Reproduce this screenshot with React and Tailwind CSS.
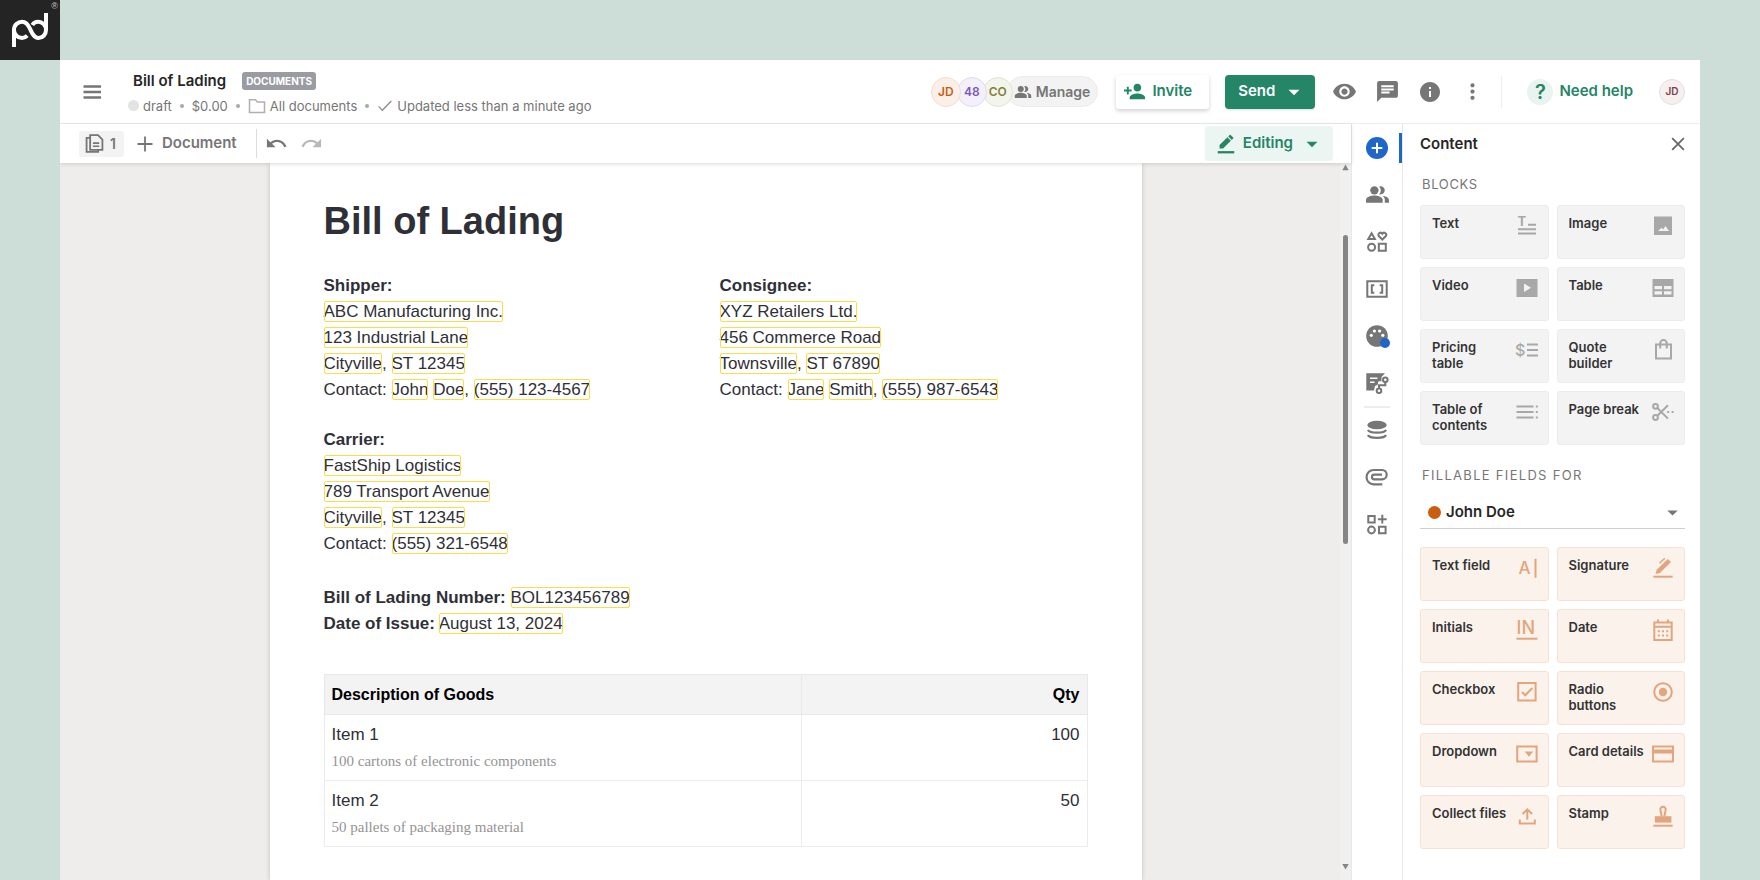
import React from "react";
import {
  MdArrowDropDown,
  MdChat,
  MdInfo,
  MdMoreVert,
  MdPeopleAlt,
  MdPersonAdd,
  MdRedo,
  MdUndo,
  MdVisibility,
} from "react-icons/md";

const Icon = ({ size = 24, className = "", children }) => (
  <svg
    width={size}
    height={size}
    viewBox="0 0 24 24"
    fill="none"
    stroke="currentColor"
    strokeWidth="2"
    className={`shrink-0 ${className}`}
    aria-hidden="true"
  >
    {children}
  </svg>
);

const Solid = ({ d, ...rest }) => <path d={d} fill="currentColor" stroke="none" {...rest} />;

const Glyph = ({ children, ...rest }) => (
  <text fill="currentColor" stroke="none" fontFamily="Inter, sans-serif" {...rest}>
    {children}
  </text>
);

const blocks = [
  {
    label: "Text",
    icon: (
      <>
        <Glyph x="2.5" y="11.5" fontSize="13" fontWeight="700">T</Glyph>
        <path d="M13 10.7h8M3 15.2h18M3 19.5h18" />
      </>
    ),
  },
  {
    label: "Image",
    icon: <Solid fillRule="evenodd" d="M3 2.5h18V21H3zM7 17h11l-3.5-5-2.5 3.5-1.5-1.7z" />,
  },
  {
    label: "Video",
    icon: <Solid fillRule="evenodd" d="M1.5 3h21v18h-21zM9 7.5v8.5l7-4.2z" />,
  },
  {
    label: "Table",
    icon: (
      <Solid
        fillRule="evenodd"
        d="M1.5 3h21v18h-21zM3.5 10v3.2h7.5V10zM13 10v3.200h7.500V10zM3.500 15.200v3.200H11v-3.200zM13 15.200v3.200h7.500v-3.200z"
      />
    ),
  },
  {
    label: "Pricing table",
    icon: (
      <>
        <Glyph x="0" y="17.5" fontSize="16" fontWeight="500">$</Glyph>
        <path d="M12 6.5h11M12 12h11M12 17.5h11" />
      </>
    ),
  },
  {
    label: "Quote builder",
    icon: <path d="M5 6.5h15v14H5zM9.2 10.5V5.2a3.3 3.3 0 0 1 6.6 0v5.3" />,
  },
  {
    label: "Table of contents",
    icon: <path d="M1.5 6.5h17M1.5 12h17M1.5 17.5h17M20.8 6.5h2M20.8 12h2M20.8 17.5h2" />,
  },
  {
    label: "Page break",
    icon: (
      <>
        <circle cx="4.5" cy="6.3" r="2.4" />
        <circle cx="4.5" cy="17.5" r="2.4" />
        <path d="M6.3 8L17 18.6M6.3 15.8L17 5.3M16.2 12h2M20.6 12h2" />
      </>
    ),
  },
];

const fields = [
  {
    label: "Text field",
    icon: (
      <>
        <Glyph x="3.5" y="18.4" fontSize="17" fontWeight="500">A</Glyph>
        <path d="M20.5 2.8v19" />
      </>
    ),
  },
  {
    label: "Signature",
    icon: (
      <>
        <Solid d="M4.5 18l1.2-4.2L16.8 2.9l3.2 3.2L8.9 17z" />
        <path d="M8.5 7.3l5.3-5" strokeWidth="1.5" />
        <path d="M2.3 20.7h19.4" />
      </>
    ),
  },
  {
    label: "Initials",
    icon: (
      <>
        <Glyph x="1.5" y="16.3" fontSize="18" fontWeight="500">IN</Glyph>
        <path d="M1.5 20.7h21" />
      </>
    ),
  },
  {
    label: "Date",
    icon: (
      <>
        <path d="M3.3 4.5h17.4v17.4H3.3zM3.3 8.8h17.4M7 1.5v3M17 1.5v3" />
        <path d="M6.8 13.3h2M11 13.3h2M15.2 13.3h2M6.8 17.6h2M11 17.6h2M15.2 17.6h2" />
      </>
    ),
  },
  {
    label: "Checkbox",
    icon: (
      <>
        <path d="M3.2 3h17.4v17.6H3.2z" />
        <path d="M7 12l3.3 3.3 7-7.3" />
      </>
    ),
  },
  {
    label: "Radio buttons",
    icon: (
      <>
        <circle cx="12" cy="12" r="8.8" />
        <circle cx="12" cy="12" r="4.2" fill="currentColor" stroke="none" />
      </>
    ),
  },
  {
    label: "Dropdown",
    icon: (
      <>
        <path d="M2.2 4.4h19.4v15H2.2z" />
        <Solid d="M9.8 9.4h8.4L14 14.7z" />
      </>
    ),
  },
  {
    label: "Card details",
    icon: (
      <>
        <path d="M2 4.4h20v15H2z" />
        <Solid d="M2 7.5h20v4H2z" />
      </>
    ),
  },
  {
    label: "Collect files",
    icon: <path d="M4.8 15.5v3.9h15v-3.9M12.3 15.8V5.4M7.5 10l4.8-4.7L17.1 10" />,
  },
  {
    label: "Stamp",
    icon: (
      <>
        <path d="M10.7 12.5L9.4 6.2a2.7 2.7 0 1 1 5.2 0l-1.3 6.3" />
        <Solid d="M3.8 12.2h16.6v6.4H3.8z" />
        <path d="M2.3 21.7h19.4" />
      </>
    ),
  },
];

const railIcons = [
  {
    label: "Content",
    active: true,
    icon: (
      <Icon className="text-[#1f66c9]">
        <circle cx="12" cy="12" r="11" fill="currentColor" stroke="none" />
        <path d="M12 6.7v10.6M6.7 12h10.6" stroke="white" />
      </Icon>
    ),
  },
  { label: "Recipients", icon: <MdPeopleAlt size={25} /> },
  {
    label: "Elements",
    icon: (
      <Icon>
        <path d="M6.6 3.3L9.9 9H3.300z" />
        <path d="M17.3 9.5L13.700 6a2.100 2.100 0 0 1 3.600-2.300A2.100 2.100 0 0 1 20.900 6z" />
        <circle cx="6.600" cy="17.300" r="3.500" />
        <path d="M13.800 13.700h7v7h-7z" />
      </Icon>
    ),
  },
  {
    label: "Variables",
    icon: (
      <Icon>
        <path d="M2.300 4.200h19.400v15.600H2.300z" />
        <path d="M9.300 8.200H6.800v7.600h2.500M14.700 8.200h2.500v7.600h-2.500" />
      </Icon>
    ),
  },
  {
    label: "Theme",
    dot: true,
    icon: (
      <Icon>
        <circle cx="12" cy="12" r="10.8" fill="currentColor" stroke="none" />
        <g fill="white" stroke="none">
          <circle cx="6.3" cy="11.3" r="1.6" />
          <circle cx="9.4" cy="7" r="1.6" />
          <circle cx="14.6" cy="7" r="1.6" />
          <circle cx="17.8" cy="11.3" r="1.6" />
        </g>
      </Icon>
    ),
  },
  {
    label: "Workflow",
    icon: (
      <Icon>
        <Solid d="M1.3 2.3H20l-3.500 3.700v4.200h-3L12.500 14l-2.500 1-1 4.500H1.300z" />
        <path d="M5 7.300h7.500M5 11.300h4.500" stroke="white" strokeWidth="1.600" />
        <circle cx="20.300" cy="8.800" r="2.300" />
        <circle cx="14" cy="19.700" r="2.300" />
        <path d="M20.300 11v3.200H14v3.200" />
      </Icon>
    ),
  },
  {
    label: "Data",
    divided: true,
    icon: (
      <Icon>
        <ellipse cx="12" cy="7" rx="9.700" ry="4.300" fill="currentColor" stroke="none" />
        <path d="M3 11.800c1.500 3.800 16.500 3.800 18 0M3 17c1.500 3.800 16.500 3.800 18 0" strokeWidth="2.300" />
      </Icon>
    ),
  },
  {
    label: "Attachments",
    icon: (
      <Icon>
        <path
          d="M17.300 19.300H8.700a6.700 6.700 0 0 1 0-14.300h8.300a4.600 4.600 0 0 1 0 9.400H9.300a2.300 2.300 0 0 1 0-4.700h7.700"
          strokeWidth="2.200"
        />
      </Icon>
    ),
  },
  {
    label: "Apps",
    icon: (
      <Icon>
        <path d="M3.300 4h6.400v6.400H3.300zM14 14.700h6.600v6.600H14zM17.300 2.800v8.800M12.900 7.200h8.800" />
        <circle cx="6.500" cy="18" r="3.400" />
      </Icon>
    ),
  },
];

const Tile = ({ label, icon, className }) => (
  <button
    type="button"
    className={`flex h-[54px] items-start justify-between rounded-[3px] border pt-2 pr-[9px] pl-[11px] text-left ${className}`}
  >
    <span className="pt-px text-[13px] leading-4 font-semibold text-[#333]">{label}</span>
    <Icon>{icon}</Icon>
  </button>
);

const blockTiles = blocks.map((block) => {
  // short names that still wrap onto two lines inside the tile
  const [first, ...rest] = block.label.split(" ");
  if (block.label === "Pricing table" || block.label === "Quote builder") {
    return { ...block, label: <>{first}<br />{rest.join(" ")}</> };
  }
  return block;
});

const Var = ({ children }) => (
  <span className="rounded-[2px] py-px outline-1 -outline-offset-1 outline-[#fddd45]">{children}</span>
);

const Avatar = ({ children, className }) => (
  <span className={`flex items-center justify-center rounded-full border font-semibold ${className}`}>
    {children}
  </span>
);

const Separator = () => <span className="mx-2 h-1 w-1 rounded-full bg-[#a8a8a8]" />;

const Logo = () => (
  <div className="relative h-15 w-15 bg-[#242424] text-white">
    <svg width="60" height="60" viewBox="0 0 60 60" fill="none" stroke="white" strokeWidth="4" aria-hidden="true">
      <path d="M14 47V30c0-5 3.800-8.300 8.200-8.300 4 0 6 3 7.900 7.200 2 4.500 3.900 9.100 8.300 9.100 4.200 0 7.600-3.300 7.600-8V13" />
      <path d="M14 30c0 4.800 3.800 8 8 8 2 0 3.800-.8 5.200-2.300" />
      <path d="M32.300 25c1.300-2 3.500-3.300 5.900-3.300 4.300 0 7.800 3.600 7.800 8.300" />
    </svg>
    <span className="absolute top-0.5 right-0.5 font-['Liberation_Sans',sans-serif] text-[9px] leading-2 text-[#c8c8c8]">
      ®
    </span>
  </div>
);

const Header = () => (
  <header className="flex h-16 shrink-0 items-center border-b border-[#ededed]">
    <button type="button" aria-label="Menu" className="ml-5 text-[#767676]">
      <Icon>
        <path d="M3.500 6.500h17.500M3.500 12h17.500M3.500 17.500h17.500" strokeWidth="2.300" />
      </Icon>
    </button>
    <div className="ml-6 flex flex-col gap-[5px] pt-[3px]">
      <div className="flex items-center gap-4 pl-[5px]">
        <h1 className="text-[15px] leading-5 font-semibold text-[#262626]">Bill of Lading</h1>
        <span className="rounded-[3px] bg-[#9b9ca3] px-1 text-[10px] leading-[18px] font-bold text-white">
          DOCUMENTS
        </span>
      </div>
      <div className="flex items-center text-[13px] leading-5 text-[#767676]">
        <span className="mr-1 h-[11px] w-[11px] rounded-full bg-[#e3e3e3]" />
        <span>draft</span>
        <Separator />
        <span>$0.00</span>
        <Separator />
        <Icon size={18} className="mr-1 text-[#b0b0b0]">
          <path d="M2 20.500V3.500h8l2.300 3H22v14z" />
        </Icon>
        <a href="#documents">All documents</a>
        <Separator />
        <Icon size={16} className="mr-1 text-[#8c8c8c]">
          <path d="M2.500 12.500l5.500 6L21.500 4.500" />
        </Icon>
        <span>Updated less than a minute ago</span>
      </div>
    </div>

    <div className="ml-auto flex items-center">
      <Avatar className="z-30 h-[30px] w-[30px] border-[#f6dccb] bg-[#fbf0e9] text-xs text-[#cc5c10]">JD</Avatar>
      <Avatar className="z-20 -ml-1 h-[30px] w-[30px] border-[#e0d9f3] bg-[#f3f0fa] text-xs text-[#7a55bd]">48</Avatar>
      <Avatar className="z-10 -ml-1 h-[30px] w-[30px] border-[#e2e4cf] bg-[#f3f4ec] text-xs text-[#7f8438]">CO</Avatar>
      <button
        type="button"
        className="-ml-1.5 flex h-[31px] items-center gap-1 rounded-full border border-[#ebebeb] bg-[#f3f3f3] pr-[7px] pl-1.5 text-sm font-semibold text-[#767676]"
      >
        <MdPeopleAlt size={18} />
        Manage
      </button>
      <button
        type="button"
        className="ml-[18px] flex h-[34px] items-center gap-1.5 rounded-[3px] bg-white pr-[17px] pl-[7px] text-[15px] font-semibold text-[#248567] shadow-[0_2px_4px_rgba(0,0,0,0.18)]"
      >
        <MdPersonAdd size={23} />
        Invite
      </button>
      <button
        type="button"
        className="ml-4 flex h-[34px] items-center gap-1.5 rounded-[4px] bg-[#248567] pr-2 pl-[13px] text-[15px] font-semibold text-white shadow-sm"
      >
        Send
        <MdArrowDropDown size={26} />
      </button>
      <div className="flex items-center gap-[18px] pl-[17px] text-[#767676]">
        <button type="button" aria-label="Preview"><MdVisibility size={25} /></button>
        <button type="button" aria-label="Comments"><MdChat size={25} /></button>
        <button type="button" aria-label="Info"><MdInfo size={24} /></button>
        <button type="button" aria-label="More"><MdMoreVert size={25} /></button>
      </div>
      <span className="ml-4 h-8 w-px bg-[#ededed]" />
      <a href="#help" className="ml-[25px] flex items-center gap-1.5 text-[15px] font-semibold text-[#248567]">
        <span className="flex h-[26px] w-[26px] items-center justify-center rounded-full bg-[#e9f3f0] text-xl">?</span>
        Need help
      </a>
      <Avatar className="mr-[15px] ml-[26px] h-[26px] w-[26px] border-[#ecdcde] bg-[#f5eff0] text-[10px] text-[#80404a]">
        JD
      </Avatar>
    </div>
  </header>
);

const Toolbar = () => (
  <div className="z-10 flex h-[39px] shrink-0 items-center bg-white pr-[18px] pl-[19px] text-[15px] font-semibold text-[#767676] shadow-[0_1px_4px_rgba(0,0,0,0.15)]">
    <button type="button" className="flex h-[26px] items-center gap-1.5 rounded-[3px] bg-[#f3f3f3] pr-2 pl-1.5 text-sm">
      <Icon size={19}>
        <path d="M6.500 1.500h10L22 7v13H6.500zM6.500 5H2v17.500h14.500V20" strokeWidth="2.300" />
        <path d="M10 11.500h8M10 15.500h8" />
      </Icon>
      1
    </button>
    <button type="button" className="ml-3 flex items-center gap-2">
      <Icon size={18}>
        <path d="M12 2v20M2 12h20" strokeWidth="2.400" />
      </Icon>
      Document
    </button>
    <span className="ml-[19px] h-[29px] w-px bg-[#dcdcdc]" />
    <button type="button" aria-label="Undo" className="ml-2"><MdUndo size={23} /></button>
    <button type="button" aria-label="Redo" className="ml-3 text-[#b8b8b8]"><MdRedo size={23} /></button>
    <button
      type="button"
      className="ml-auto flex h-[35px] items-center gap-1.5 rounded-[4px] bg-[#ebf5f1] pr-2 pl-2.5 text-[#248567]"
    >
      <Icon size={22}>
        <Solid d="M5 17v-3.800L13.500 4.700l3.800 3.800L8.800 17zM14.500 3.700l2-2 3.800 3.800-2 2z" />
        <path d="M3 21h18" strokeWidth="2.500" />
      </Icon>
      Editing
      <MdArrowDropDown size={26} />
    </button>
  </div>
);

const Page = () => (
  <article className="w-[872px] max-w-full shrink-0 bg-white px-[54px] pt-[34px] pb-20 font-['Liberation_Sans',Arial,sans-serif] text-[17px] leading-[26px] text-[#2f3037] shadow-[0_0_5px_rgba(0,0,0,0.18)]">
    <h2 className="mb-7 text-[38px] leading-12 font-bold">Bill of Lading</h2>
    <div className="grid grid-cols-2 gap-x-7">
      <section>
        <h3 className="font-bold">Shipper:</h3>
        <p><Var>ABC Manufacturing Inc.</Var></p>
        <p><Var>123 Industrial Lane</Var></p>
        <p><Var>Cityville</Var>, <Var>ST 12345</Var></p>
        <p>Contact: <Var>John</Var> <Var>Doe</Var>, <Var>(555) 123-4567</Var></p>
      </section>
      <section>
        <h3 className="font-bold">Consignee:</h3>
        <p><Var>XYZ Retailers Ltd.</Var></p>
        <p><Var>456 Commerce Road</Var></p>
        <p><Var>Townsville</Var>, <Var>ST 67890</Var></p>
        <p>Contact: <Var>Jane</Var> <Var>Smith</Var>, <Var>(555) 987-6543</Var></p>
      </section>
    </div>
    <section className="mt-6">
      <h3 className="font-bold">Carrier:</h3>
      <p><Var>FastShip Logistics</Var></p>
      <p><Var>789 Transport Avenue</Var></p>
      <p><Var>Cityville</Var>, <Var>ST 12345</Var></p>
      <p>Contact: <Var>(555) 321-6548</Var></p>
    </section>
    <section className="mt-7">
      <p><strong>Bill of Lading Number:</strong> <Var>BOL123456789</Var></p>
      <p><strong>Date of Issue:</strong> <Var>August 13, 2024</Var></p>
    </section>
    <table className="mt-[37px] w-full border-collapse">
      <thead>
        <tr className="h-10 bg-[#f3f3f3] text-base text-black">
          <th className="w-[477px] border border-[#e8e8e8] px-[7px] text-left">Description of Goods</th>
          <th className="border border-[#e8e8e8] px-[7px] text-right">Qty</th>
        </tr>
      </thead>
      <tbody>
        {[
          ["Item 1", "100 cartons of electronic components", "100"],
          ["Item 2", "50 pallets of packaging material", "50"],
        ].map(([name, note, qty]) => (
          <tr key={name} className="h-[66px] align-top">
            <td className="border border-[#ececec] px-[7px] pt-[7px]">
              {name}
              <div className="font-['Liberation_Serif','Times_New_Roman',serif] text-[15px] text-[#949494]">{note}</div>
            </td>
            <td className="border border-[#ececec] px-[7px] pt-[7px] text-right">{qty}</td>
          </tr>
        ))}
      </tbody>
    </table>
  </article>
);

const ScrollBar = () => (
  <div className="absolute inset-y-0 right-0 flex w-[11px] flex-col items-center justify-between bg-[#f0f0f0] pt-px pb-2.5 text-[#858585]">
    <Icon size={7}><Solid d="M12 2l11 19H1z" /></Icon>
    <span className="absolute top-[72px] h-[309px] w-[5px] rounded-full bg-[#858585]" />
    <Icon size={7}><Solid d="M12 22L1 3h22z" /></Icon>
  </div>
);

const Rail = () => (
  <nav className="w-[51px] shrink-0 border-l border-[#e8e8e8] bg-white text-[#767676]">
    {railIcons.map((item) => (
      <button
        key={item.label}
        type="button"
        aria-label={item.label}
        className="relative flex h-[47px] w-full items-center justify-center"
      >
        {item.divided && <span className="absolute top-0 h-0.5 w-[26px] bg-[#ececec]" />}
        {item.icon}
        {item.dot && (
          <span className="absolute right-3 bottom-[11px] h-[10px] w-[10px] rounded-full bg-[#1f66c9]" />
        )}
        {item.active && <span className="absolute top-[9px] right-0 h-[30px] w-[3px] bg-[#1f66c9]" />}
      </button>
    ))}
  </nav>
);

const Panel = () => (
  <aside className="w-[298px] shrink-0 border-l border-[#e8e8e8] bg-white pr-[15px] pl-[17px]">
    <div className="flex h-10 items-center justify-between">
      <h2 className="text-[15px] font-semibold text-[#262626]">Content</h2>
      <button type="button" aria-label="Close" className="text-[#666]">
        <Icon size={14}>
          <path d="M2 2l20 20M22 2L2 22" strokeWidth="3" />
        </Icon>
      </button>
    </div>
    <h3 className="mt-2.5 pl-0.5 text-[13px] leading-5 tracking-wider text-[#767676]">BLOCKS</h3>
    <div className="mt-[11px] grid grid-cols-2 gap-2">
      {blockTiles.map((block, i) => (
        <Tile key={i} {...block} className="border-[#ececec] bg-[#f3f3f3] text-[#a8a8a8]" />
      ))}
    </div>
    <h3 className="mt-5 pl-0.5 text-[13px] leading-5 tracking-widest text-[#767676]">FILLABLE FIELDS FOR</h3>
    <div className="relative mt-[11px] flex h-[33px] items-center border-b border-[#cfcfcf] pl-2">
      <span className="h-[13px] w-[13px] shrink-0 rounded-full bg-[#cc5c10]" />
      <select
        aria-label="Fillable fields for"
        className="w-full appearance-none bg-transparent pl-[5px] text-[15px] font-semibold text-[#262626]"
      >
        <option>John Doe</option>
      </select>
      <MdArrowDropDown size={25} className="pointer-events-none absolute right-0 text-[#767676]" />
    </div>
    <div className="mt-[18px] grid grid-cols-2 gap-2">
      {fields.map((field) => (
        <Tile key={field.label} {...field} className="border-[#f7e1d2] bg-[#fbf2ec] text-[#e3a57d]" />
      ))}
    </div>
  </aside>
);

const App = () => {
  return (
    <div className="flex h-screen flex-col bg-[#cdded8] font-[Inter,'Liberation_Sans',sans-serif]">
      <Logo />
      <main className="mx-15 flex min-h-0 flex-1 flex-col overflow-hidden bg-white">
        <Header />
        <div className="flex min-h-0 flex-1">
          <div className="flex min-w-0 flex-1 flex-col">
            <Toolbar />
            <div className="relative flex min-h-0 flex-1 justify-center overflow-hidden bg-[#eeedeb]">
              <Page />
              <ScrollBar />
            </div>
          </div>
          <Rail />
          <Panel />
        </div>
      </main>
    </div>
  );
};

export default App;
